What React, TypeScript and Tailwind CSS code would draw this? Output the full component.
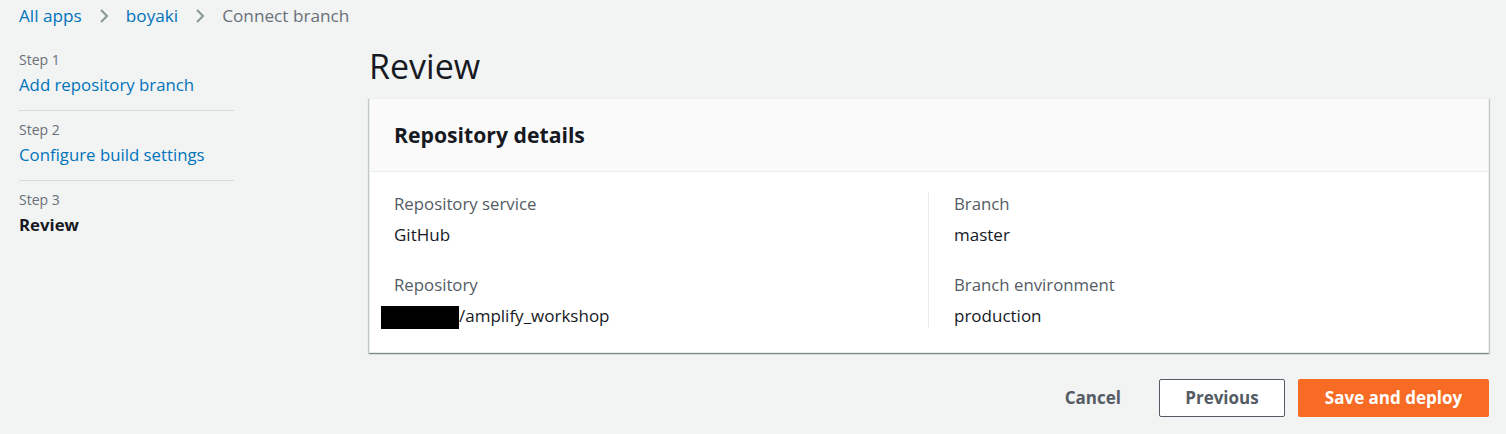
import React from "react";

const font = { fontFamily: '"Open Sans", "Noto Sans", Arial, sans-serif' };

function Chevron() {
  return (
    <svg width="12" height="18" viewBox="0 0 12 18" className="mx-[16px]">
      <path d="M3 3l6 6-6 6" fill="none" stroke="#879596" strokeWidth="2" />
    </svg>
  );
}

const steps = [
  { step: "Step 1", label: "Add repository branch", active: false },
  { step: "Step 2", label: "Configure build settings", active: false },
  { step: "Step 3", label: "Review", active: true },
];

function Field({ label, children }: { label: string; children: React.ReactNode }) {
  return (
    <div>
      <div className="text-[16.8px] leading-[24px] text-[#545b64]">{label}</div>
      <div className="mt-[7px] text-[17px] leading-[24px] text-[#16191f]">{children}</div>
    </div>
  );
}

export default function App() {
  return (
    <div className="h-[434px] w-[1506px] bg-[#f2f3f3] text-[#16191f]" style={font}>
      <nav className="flex h-[31px] items-center pl-[19px] text-[17.2px]">
        <a className="text-[#0073bb]">All apps</a>
        <Chevron />
        <a className="text-[#0073bb]">boyaki</a>
        <Chevron />
        <span className="text-[#687078]">Connect branch</span>
      </nav>

      <div className="flex">
        <aside className="ml-[19px] w-[215px] pt-[19px]">
          {steps.map((s, i) => (
            <div
              key={s.step}
              className={`${i < steps.length - 1 ? "border-b border-[#d5dbdb] pb-[13px]" : ""} ${i > 0 ? "pt-[9px]" : ""}`}
            >
              <div className="text-[14px] leading-[20px] text-[#687078]">{s.step}</div>
              <div
                className={`mt-[3px] text-[16.8px] leading-[24px] ${s.active ? "font-bold text-[#16191f]" : "text-[#0073bb]"}`}
              >
                {s.label}
              </div>
            </div>
          ))}
        </aside>

        <main className="ml-[135px] w-[1120px]">
          <h1 className="mt-[13px] h-[54px] text-[34px] leading-[44px] text-[#16191f]">Review</h1>

          <section className="border border-[#eaeded] bg-white shadow-[0_1px_1px_0_rgba(0,28,36,0.3),1px_1px_1px_0_rgba(0,28,36,0.15),-1px_1px_1px_0_rgba(0,28,36,0.15)]">
            <div className="flex h-[73px] items-center border-b border-[#eaeded] bg-[#fafafa] px-[24px]">
              <h2 className="text-[21.2px] font-bold">Repository details</h2>
            </div>
            <div className="grid grid-cols-2 px-[24px] pt-[20px] pb-[24px]">
              <div className="space-y-[26px] border-r border-[#eaeded] pr-[25px]">
                <Field label="Repository service">GitHub</Field>
                <Field label="Repository">
                  <span className="-ml-[13px] flex">
                    <span className="inline-block h-[23px] w-[78px] translate-y-[2px] bg-black" />
                    /amplify_workshop
                  </span>
                </Field>
              </div>
              <div className="space-y-[26px] pl-[25px]">
                <Field label="Branch">master</Field>
                <Field label="Branch environment">production</Field>
              </div>
            </div>
          </section>

          <div className="mt-[26px] flex items-center justify-end">
            <button className="mr-[38px] text-[17px] font-bold text-[#545b64]">Cancel</button>
            <button className="mr-[13px] h-[38px] w-[126px] rounded-[2px] border border-[#545b64] bg-white text-[17px] font-bold text-[#545b64]">
              Previous
            </button>
            <button className="h-[38px] w-[191px] rounded-[2px] bg-[#f86b25] text-[17px] font-bold text-white">
              Save and deploy
            </button>
          </div>
        </main>
      </div>
    </div>
  );
}
